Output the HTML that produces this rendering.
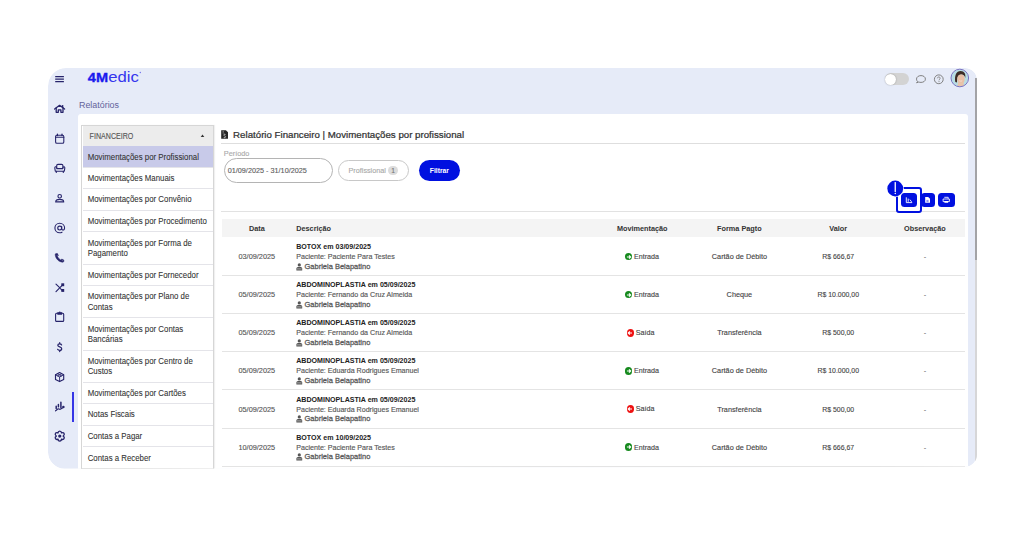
<!DOCTYPE html>
<html><head><meta charset="utf-8"><style>
html,body{margin:0;padding:0;width:1024px;height:538px;overflow:hidden;background:#fff;}
body{font-family:"Liberation Sans",sans-serif;}
#clip{position:absolute;left:0;top:0;width:1024px;height:538px;clip-path:path('M66 68 H965 A12 12 0 0 1 977 80 V454.8 A12 12 0 0 1 965 466.8 L64.5 468.7 A16.5 16.5 0 0 1 48 452.2 V86 A18 18 0 0 1 66 68 Z');}
.t{position:absolute;white-space:nowrap;}
.r{position:absolute;}
svg.r{overflow:visible;}
</style></head><body><div id="clip">
<svg class="r" style="left:0;top:0" width="1024" height="538"><path d="M66 68 H965 A12 12 0 0 1 977 80 V454.8 A12 12 0 0 1 965 466.8 L64.5 468.7 A16.5 16.5 0 0 1 48 452.2 V86 A18 18 0 0 1 66 68 Z" fill="#e6ebf8"/></svg>
<div class="r" style="left:975.00px;top:78.00px;width:2.00px;height:181.50px;background:#a3a3a6;"></div>
<div class="r" style="left:975.00px;top:259.50px;width:2.00px;height:210.50px;background:#d6d6d8;"></div>
<svg class="r" style="left:0;top:0" width="1024" height="538" viewBox="0 0 1024 538"><text x="87.8" y="81.9" font-family="Liberation Sans" font-weight="700" font-size="13.4" fill="#1a1aee" stroke="#1a1aee" stroke-width="0.35" textLength="20.2" lengthAdjust="spacingAndGlyphs">4M</text><text x="108.3" y="81.9" font-family="Liberation Sans" font-size="14.2" fill="#3535ee" textLength="30.6" lengthAdjust="spacingAndGlyphs">edic</text><circle cx="140.3" cy="72.4" r="0.75" fill="#7777ee"/></svg>

<div class="r" style="left:884.60px;top:73.20px;width:24.00px;height:11.90px;background:#d3d3d3;border-radius:6px;"></div>
<div class="r" style="left:884.60px;top:73.70px;width:11.00px;height:11.00px;background:#fff;border-radius:50%;box-shadow:0 0 1.5px rgba(0,0,0,.35);"></div>
<svg class="r" style="left:0;top:0" width="1024" height="538" viewBox="0 0 1024 538"><path d="M917.6 81.4 C916.8 80.8 916.5 80.1 916.5 79.1 C916.5 77 918.5 75.6 921 75.6 C923.5 75.6 925.4 77 925.4 79.1 C925.4 81.1 923.5 82.4 921 82.4 C920.2 82.4 919.4 82.3 918.8 82 L916.6 82.8 Z" fill="none" stroke="#7b7b7b" stroke-width="0.95" stroke-linejoin="round"/><circle cx="938.8" cy="79.3" r="4.4" fill="none" stroke="#7b7b7b" stroke-width="0.95"/><path d="M937.4 78.3 C937.4 77.4 938.1 76.9 938.8 76.9 C939.6 76.9 940.2 77.4 940.2 78.2 C940.2 79.1 939 79.2 939 80.3" fill="none" stroke="#8a8a8a" stroke-width="0.95"/><circle cx="939" cy="81.6" r="0.55" fill="#8a8a8a"/><defs><clipPath id="av"><circle cx="959.8" cy="78" r="8.6"/></clipPath></defs><circle cx="959.8" cy="78" r="8.6" fill="#b8dde4"/><g clip-path="url(#av)"><path d="M955.3 82 C954.3 75.5 956.3 70.9 960.6 70.9 C964.4 70.9 965.9 73.8 965.3 78 C964.8 75.6 963.4 74.2 961 74.4 C958.6 74.6 957.4 76.4 957.2 79.2 L956.9 82.6 Z" fill="#3d2c25"/><ellipse cx="961" cy="78.9" rx="3.7" ry="4.5" fill="#e9bfa6"/><path d="M957.5 82.5 C958.2 84.5 958.4 85.5 955 87.5 L966.5 87.5 C963.5 85.5 963.4 84.5 963.8 82.5 Z" fill="#e8c4aa"/><path d="M959.2 80.6 C960 81.3 961.4 81.3 962.2 80.6" stroke="#f6e6dc" stroke-width="0.8" fill="none"/></g><circle cx="959.8" cy="78" r="8.8" fill="none" stroke="#7a74c2" stroke-width="1"/></svg>
<div class="r" style="left:78.00px;top:114.30px;width:890.00px;height:365.70px;background:#fff;border-radius:3px;"></div>
<div class="r" style="left:81.20px;top:125.00px;width:132.40px;height:355.00px;background:#fff;border:1px solid #d6d6d6;box-sizing:border-box;box-shadow:1px 0 1px rgba(0,0,0,.06);"></div>
<div class="r" style="left:82.50px;top:126.00px;width:130.00px;height:20.00px;background:#ececec;"></div>
<div class="r" style="left:81.20px;top:468.00px;width:132.40px;height:1.00px;background:#d6d6d6;"></div>

<svg class="r" style="left:0;top:0" width="1024" height="538"><path d="M200.7 137.1 L202.5 134.6 L204.3 137.1Z" fill="#333"/></svg>
<div class="r" style="left:82.50px;top:146.00px;width:130.00px;height:21.30px;background:#c8cae9;"></div>

<div class="r" style="left:82.50px;top:167.00px;width:130.00px;height:1.00px;background:#e4e4e9;"></div>

<div class="r" style="left:82.50px;top:188.00px;width:130.00px;height:1.00px;background:#e4e4e9;"></div>

<div class="r" style="left:82.50px;top:210.00px;width:130.00px;height:1.00px;background:#e4e4e9;"></div>

<div class="r" style="left:82.50px;top:231.00px;width:130.00px;height:1.00px;background:#e4e4e9;"></div>


<div class="r" style="left:82.50px;top:264.00px;width:130.00px;height:1.00px;background:#e4e4e9;"></div>

<div class="r" style="left:82.50px;top:285.00px;width:130.00px;height:1.00px;background:#e4e4e9;"></div>


<div class="r" style="left:82.50px;top:317.00px;width:130.00px;height:1.00px;background:#e4e4e9;"></div>


<div class="r" style="left:82.50px;top:350.00px;width:130.00px;height:1.00px;background:#e4e4e9;"></div>


<div class="r" style="left:82.50px;top:382.00px;width:130.00px;height:1.00px;background:#e4e4e9;"></div>

<div class="r" style="left:82.50px;top:403.00px;width:130.00px;height:1.00px;background:#e4e4e9;"></div>

<div class="r" style="left:82.50px;top:425.00px;width:130.00px;height:1.00px;background:#e4e4e9;"></div>

<div class="r" style="left:82.50px;top:446.00px;width:130.00px;height:1.00px;background:#e4e4e9;"></div>

<svg class="r" style="left:0;top:0" width="1024" height="538" viewBox="0 0 1024 538"><path d="M55.2 76.6H63.9M55.2 79.1H63.9M55.2 81.6H63.9" stroke="#27246b" stroke-width="1.05" fill="none"/><path d="M54.6 109 L59.6 105.3 L64.6 109" stroke="#27246b" fill="none" stroke-linejoin="round" stroke-linecap="round" stroke-width="1.3"/><path d="M56.2 108 V112.3 H58.3 V109.8 H60.9 V112.3 H63 V108" stroke="#27246b" fill="none" stroke-linejoin="round" stroke-linecap="round" stroke-width="1.3"/><path d="M62.6 105.6 V107.4" stroke="#27246b" fill="none" stroke-linejoin="round" stroke-linecap="round" stroke-width="1.4"/><rect x="55.6" y="135.3" width="8.2" height="8" rx="1.3" stroke="#27246b" fill="none" stroke-linejoin="round" stroke-linecap="round" stroke-width="1.1"/><path d="M55.6 137.3 H63.8" stroke="#27246b" fill="none" stroke-linejoin="round" stroke-linecap="round" stroke-width="1.1"/><path d="M57.4 134.2 V135.6 M62 134.2 V135.6" stroke="#27246b" fill="none" stroke-linejoin="round" stroke-linecap="round" stroke-width="1.3"/><path d="M56.7 168.6 V165.6 C56.7 164.8 57.2 164.4 58 164.4 H61.6 C62.4 164.4 62.9 164.8 62.9 165.6 V168.6 Z" stroke="#27246b" fill="none" stroke-linejoin="round" stroke-linecap="round" stroke-width="1.1"/><path d="M56.7 167.4 C56.3 166.8 55.9 166.7 55.4 166.8 C54.9 167 54.7 167.5 54.8 168.1 L55.3 171.2 H64.3 L64.8 168.1 C64.9 167.5 64.7 167 64.2 166.8 C63.7 166.7 63.3 166.8 62.9 167.4" stroke="#27246b" fill="none" stroke-linejoin="round" stroke-linecap="round" stroke-width="1.1"/><path d="M56.3 171.3 V172.5 M63.3 171.3 V172.5" stroke="#27246b" fill="none" stroke-linejoin="round" stroke-linecap="round" stroke-width="1.1"/><circle cx="59.7" cy="196.2" r="1.75" stroke="#27246b" fill="none" stroke-linejoin="round" stroke-linecap="round" stroke-width="1.15"/><path d="M55.7 201.9 C55.7 200.2 57.3 199.4 59.7 199.4 C62.1 199.4 63.7 200.2 63.7 201.9 Z" stroke="#27246b" fill="none" stroke-linejoin="round" stroke-linecap="round" stroke-width="1.15"/><circle cx="59.7" cy="228" r="1.95" stroke="#27246b" fill="none" stroke-linejoin="round" stroke-linecap="round" stroke-width="1.15"/><path d="M61.65 226.3 V228.6 C61.65 229.6 62.3 230.1 63 230.1 C63.9 230.1 64.6 229.3 64.6 228 C64.6 225.2 62.4 223.2 59.7 223.2 C57 223.2 54.9 225.3 54.9 228 C54.9 230.7 57 232.8 59.7 232.8 C60.6 232.8 61.3 232.6 62 232.2" stroke="#27246b" fill="none" stroke-linejoin="round" stroke-linecap="round" stroke-width="1.1"/><path d="M56.3 253.5 L57.5 253.6 L58.4 255.6 L57.5 256.6 C58.2 258.1 59.3 259.3 60.8 260 L61.8 259.1 L63.8 260 L63.8 261.3 C63.7 261.9 63.2 262.3 62.6 262.2 C58.6 261.8 55.6 258.8 55.2 254.8 C55.1 254.1 55.6 253.5 56.3 253.5 Z" fill="#27246b" stroke="#27246b" stroke-width="0.5" stroke-linejoin="round"/><path d="M57.2 255.1 C57.3 255.5 57.3 255.8 57.1 256.2 M61.8 260.7 C62.2 260.6 62.5 260.6 62.9 260.8" stroke="#e6ebf8" stroke-width="0.4" fill="none"/><path d="M56.3 253.8 L57.4 253.9 L58.1 255.6 L57.2 256.6 C58 258.3 59.2 259.5 60.9 260.3 L61.9 259.4 L63.5 260.1" stroke="#e6ebf8" stroke-width="0" fill="none"/><path d="M56 284.2 L59.4 287.4 M56 291.6 L62.4 285.2" stroke="#27246b" fill="none" stroke-linejoin="round" stroke-linecap="round" stroke-width="1.15"/><rect x="61.3" y="283.3" width="2.9" height="2.9" fill="#27246b"/><rect x="61.3" y="289" width="2.9" height="2.9" fill="#27246b"/><path d="M60.4 288.6 L62 290.2" stroke="#27246b" fill="none" stroke-linejoin="round" stroke-linecap="round" stroke-width="1.1"/><rect x="55.6" y="313.3" width="8.1" height="8.1" rx="1" stroke="#27246b" fill="none" stroke-linejoin="round" stroke-linecap="round" stroke-width="1.1"/><path d="M57.6 312.6 H61.9 V314.4 H57.6 Z" fill="#27246b" stroke="#27246b" stroke-width="0.6" stroke-linejoin="round"/><circle cx="59.75" cy="312.3" r="0.8" fill="#27246b"/><path d="M61.6 344.9 C61.3 344.2 60.6 343.8 59.7 343.8 C58.6 343.8 57.8 344.4 57.8 345.3 C57.8 347.3 61.7 346.5 61.7 348.7 C61.7 349.7 60.8 350.4 59.7 350.4 C58.7 350.4 58 350 57.6 349.3 M59.7 342.7 V343.8 M59.7 350.4 V351.6" stroke="#27246b" fill="none" stroke-linejoin="round" stroke-linecap="round" stroke-width="1.25"/><path d="M59.6 372.5 L63.7 374.8 V379.4 L59.6 381.6 L55.5 379.4 V374.8 Z" stroke="#27246b" fill="none" stroke-linejoin="round" stroke-linecap="round" stroke-width="1.15"/><path d="M55.5 374.8 L59.6 377 L63.7 374.8 M59.6 377 V381.6 M57.5 373.7 L61.6 375.9 M61.6 373.7 L57.6 375.8" stroke="#27246b" fill="none" stroke-linejoin="round" stroke-linecap="round" stroke-width="0.9"/><path d="M56.2 406.3 V408.6 M58.4 404.4 V406.8 M60.9 402.2 V407.6" stroke="#27246b" fill="none" stroke-linejoin="round" stroke-linecap="round" stroke-width="1.5"/><path d="M55.6 410.8 L57.8 409 C58.6 408.4 59.3 409.6 60.2 409.3 L62.4 408" stroke="#27246b" fill="none" stroke-linejoin="round" stroke-linecap="round" stroke-width="1.2"/><circle cx="63.4" cy="407.1" r="1.25" fill="#27246b"/><g transform="translate(59.75 436.1) scale(1.12) translate(-59.75 -436.1)"><path d="M59.75 431.6 C60.9 431.6 61.3 432.6 61.3 433.3 C61.9 432.9 63 432.7 63.6 433.7 C64.2 434.7 63.4 435.6 62.8 436.1 C63.4 436.5 64.2 437.4 63.6 438.4 C63 439.4 61.9 439.2 61.3 438.8 C61.3 439.6 60.9 440.6 59.75 440.6 C58.6 440.6 58.2 439.6 58.2 438.8 C57.6 439.2 56.5 439.4 55.9 438.4 C55.3 437.4 56.1 436.5 56.7 436.1 C56.1 435.6 55.3 434.7 55.9 433.7 C56.5 432.7 57.6 432.9 58.2 433.3 C58.2 432.6 58.6 431.6 59.75 431.6 Z" stroke="#27246b" fill="none" stroke-linejoin="round" stroke-linecap="round" stroke-width="1.15"/><circle cx="59.75" cy="436.1" r="1.45" fill="#27246b"/></g></svg>
<div class="r" style="left:72.00px;top:392.00px;width:2.00px;height:29.80px;background:#3636e6;"></div>
<svg class="r" style="left:0;top:0" width="1024" height="538" viewBox="0 0 1024 538"><path d="M221.2 130.2 H225.9 L228 132.3 V138.8 H221.2 Z" fill="#262626"/><path d="M222.5 131.7 H224 M222.5 133 H224" stroke="#bbb" stroke-width="0.6"/><path d="M225.7 134.9 C225.5 134.5 225.1 134.3 224.6 134.3 C224 134.3 223.6 134.6 223.6 135.1 C223.6 136.1 225.7 135.7 225.7 136.8 C225.7 137.3 225.2 137.6 224.6 137.6 C224.1 137.6 223.7 137.4 223.5 137 M224.6 133.8 V134.3 M224.6 137.6 V138.1" stroke="#ddd" stroke-width="0.65" fill="none"/></svg>

<div class="r" style="left:221.00px;top:142.60px;width:744.00px;height:1.20px;background:#dedede;"></div>

<div class="r" style="left:223.60px;top:158.30px;width:109.40px;height:24.90px;border:1px solid #b4b4b4;border-radius:13px;box-sizing:border-box;"></div>

<div class="r" style="left:338.00px;top:160.00px;width:71.00px;height:21.00px;border:1px solid #c8c8c8;border-radius:11px;box-sizing:border-box;"></div>

<div class="r" style="left:388.40px;top:165.70px;width:9.60px;height:9.60px;background:#dcdcdc;border-radius:50%;"></div>

<div class="r" style="left:419.00px;top:160.00px;width:41.00px;height:21.00px;background:#0010e0;border-radius:11px;"></div>

<div class="r" style="left:221.00px;top:210.50px;width:744.00px;height:1.30px;background:#e2e2e2;"></div>
<div class="r" style="left:900.90px;top:193.00px;width:16.20px;height:14.40px;background:#0010e0;border-radius:3.5px;"></div>
<div class="r" style="left:920.60px;top:193.00px;width:14.10px;height:14.40px;background:#0010e0;border-radius:3.5px;"></div>
<div class="r" style="left:938.20px;top:193.00px;width:16.40px;height:14.40px;background:#0010e0;border-radius:3.5px;"></div>
<div class="r" style="left:896.00px;top:187.10px;width:26.20px;height:26.20px;border:2.4px solid #0010e0;border-radius:3px;box-sizing:border-box;"></div>
<svg class="r" style="left:0;top:0" width="1024" height="538"><circle cx="895.25" cy="188.5" r="8.6" fill="#fff"/><circle cx="895.25" cy="188.5" r="7.9" fill="#0010e0"/><path d="M895.25 182.6 V191.6" stroke="#fff" stroke-width="1.3" stroke-linecap="round"/><circle cx="895.25" cy="193.6" r="0.75" fill="#fff"/></svg>
<svg class="r" style="left:0;top:0" width="1024" height="538"><path d="M906.3 197.3 V202.6 H912.2" stroke="#fff" stroke-width="0.9" fill="none"/><path d="M908.2 198.6 V201.8 M909.9 199.6 L911.6 201.9" stroke="#fff" stroke-width="0.9" fill="none"/><path d="M925.2 197 H928.2 L930 198.8 V202.7 H925.2 Z" fill="#fff"/><path d="M926.4 200.4 H928.6 M926.4 201.6 H928.6" stroke="#0010e0" stroke-width="0.5"/><path d="M944.3 197.3 H948.2 V198.8 M943.1 199 H949.4 V201.6 H943.1 Z" stroke="#fff" stroke-width="0.85" fill="none"/><path d="M944.4 201 H948.1 V202.8 H944.4 Z" fill="#fff"/></svg>
<div class="r" style="left:221.80px;top:219.00px;width:742.80px;height:18.40px;background:#f4f4f4;"></div>






<div class="r" style="left:222.00px;top:275.00px;width:743.00px;height:1.00px;background:#e4e4e4;"></div>



<svg class="r" style="left:295.5px;top:262.5px" width="8" height="8" viewBox="0 0 8 8"><circle cx="3.3" cy="1.9" r="1.6" fill="#555"/><path d="M0.4 7.4 V5.6 C0.4 4.5 1.6 4.1 3.3 4.1 C5 4.1 6.2 4.5 6.2 5.6 V7.4 Z" fill="#555"/><path d="M0.9 5.9 H5.7" stroke="#ccc" stroke-width="0.7"/></svg>

<div class="r" style="left:624.70px;top:252.70px;width:7.60px;height:7.60px;background:#168a1e;border-radius:50%;"></div>
<svg class="r" style="left:625.5px;top:253.5px" width="6" height="6" viewBox="0 0 6 6"><path d="M0.9 3 H4.6 M3 1.4 L4.7 3 L3 4.6" stroke="#fff" stroke-width="1.1" fill="none"/></svg>




<div class="r" style="left:222.00px;top:313.00px;width:743.00px;height:1.00px;background:#e4e4e4;"></div>



<svg class="r" style="left:295.5px;top:300.65px" width="8" height="8" viewBox="0 0 8 8"><circle cx="3.3" cy="1.9" r="1.6" fill="#555"/><path d="M0.4 7.4 V5.6 C0.4 4.5 1.6 4.1 3.3 4.1 C5 4.1 6.2 4.5 6.2 5.6 V7.4 Z" fill="#555"/><path d="M0.9 5.9 H5.7" stroke="#ccc" stroke-width="0.7"/></svg>

<div class="r" style="left:624.70px;top:290.85px;width:7.60px;height:7.60px;background:#168a1e;border-radius:50%;"></div>
<svg class="r" style="left:625.5px;top:291.65px" width="6" height="6" viewBox="0 0 6 6"><path d="M0.9 3 H4.6 M3 1.4 L4.7 3 L3 4.6" stroke="#fff" stroke-width="1.1" fill="none"/></svg>




<div class="r" style="left:222.00px;top:351.00px;width:743.00px;height:1.00px;background:#e4e4e4;"></div>



<svg class="r" style="left:295.5px;top:338.8px" width="8" height="8" viewBox="0 0 8 8"><circle cx="3.3" cy="1.9" r="1.6" fill="#555"/><path d="M0.4 7.4 V5.6 C0.4 4.5 1.6 4.1 3.3 4.1 C5 4.1 6.2 4.5 6.2 5.6 V7.4 Z" fill="#555"/><path d="M0.9 5.9 H5.7" stroke="#ccc" stroke-width="0.7"/></svg>

<div class="r" style="left:626.70px;top:329.00px;width:7.30px;height:7.60px;background:#ee1111;border-radius:50%;"></div>
<svg class="r" style="left:627.4px;top:329.8px" width="6" height="6" viewBox="0 0 6 6"><path d="M5 3 H1.3 M2.9 1.4 L1.2 3 L2.9 4.6" stroke="#fff" stroke-width="1.1" fill="none"/></svg>




<div class="r" style="left:222.00px;top:389.00px;width:743.00px;height:1.00px;background:#e4e4e4;"></div>



<svg class="r" style="left:295.5px;top:376.95px" width="8" height="8" viewBox="0 0 8 8"><circle cx="3.3" cy="1.9" r="1.6" fill="#555"/><path d="M0.4 7.4 V5.6 C0.4 4.5 1.6 4.1 3.3 4.1 C5 4.1 6.2 4.5 6.2 5.6 V7.4 Z" fill="#555"/><path d="M0.9 5.9 H5.7" stroke="#ccc" stroke-width="0.7"/></svg>

<div class="r" style="left:624.70px;top:367.15px;width:7.60px;height:7.60px;background:#168a1e;border-radius:50%;"></div>
<svg class="r" style="left:625.5px;top:367.95px" width="6" height="6" viewBox="0 0 6 6"><path d="M0.9 3 H4.6 M3 1.4 L4.7 3 L3 4.6" stroke="#fff" stroke-width="1.1" fill="none"/></svg>




<div class="r" style="left:222.00px;top:428.00px;width:743.00px;height:1.00px;background:#e4e4e4;"></div>



<svg class="r" style="left:295.5px;top:415.1px" width="8" height="8" viewBox="0 0 8 8"><circle cx="3.3" cy="1.9" r="1.6" fill="#555"/><path d="M0.4 7.4 V5.6 C0.4 4.5 1.6 4.1 3.3 4.1 C5 4.1 6.2 4.5 6.2 5.6 V7.4 Z" fill="#555"/><path d="M0.9 5.9 H5.7" stroke="#ccc" stroke-width="0.7"/></svg>

<div class="r" style="left:626.70px;top:405.30px;width:7.30px;height:7.60px;background:#ee1111;border-radius:50%;"></div>
<svg class="r" style="left:627.4px;top:406.1px" width="6" height="6" viewBox="0 0 6 6"><path d="M5 3 H1.3 M2.9 1.4 L1.2 3 L2.9 4.6" stroke="#fff" stroke-width="1.1" fill="none"/></svg>




<div class="r" style="left:222.00px;top:466.00px;width:743.00px;height:1.00px;background:#e4e4e4;"></div>



<svg class="r" style="left:295.5px;top:453.25px" width="8" height="8" viewBox="0 0 8 8"><circle cx="3.3" cy="1.9" r="1.6" fill="#555"/><path d="M0.4 7.4 V5.6 C0.4 4.5 1.6 4.1 3.3 4.1 C5 4.1 6.2 4.5 6.2 5.6 V7.4 Z" fill="#555"/><path d="M0.9 5.9 H5.7" stroke="#ccc" stroke-width="0.7"/></svg>

<div class="r" style="left:624.70px;top:443.45px;width:7.60px;height:7.60px;background:#168a1e;border-radius:50%;"></div>
<svg class="r" style="left:625.5px;top:444.25px" width="6" height="6" viewBox="0 0 6 6"><path d="M0.9 3 H4.6 M3 1.4 L4.7 3 L3 4.6" stroke="#fff" stroke-width="1.1" fill="none"/></svg>




<svg class="r" style="left:0;top:0" width="1024" height="538" viewBox="0 0 1024 538" font-family="Liberation Sans"><text transform="translate(79.00,107.70) scale(0.917,1)" font-size="9.7" font-weight="400" fill="#62629a" text-anchor="start" stroke="none">Relatórios</text>
<text transform="translate(89.60,138.60) scale(0.855,1)" font-size="8.3" font-weight="400" fill="#555" text-anchor="start"  stroke="#555" stroke-width="0.12">FINANCEIRO</text>
<text transform="translate(87.70,159.75) scale(0.935,1)" font-size="8.4" font-weight="400" fill="#333" text-anchor="start" stroke="#333" stroke-width="0.08">Movimentações por Profissional</text>
<text transform="translate(87.70,181.05) scale(0.935,1)" font-size="8.4" font-weight="400" fill="#333" text-anchor="start" stroke="#333" stroke-width="0.08">Movimentações Manuais</text>
<text transform="translate(87.70,202.40) scale(0.935,1)" font-size="8.4" font-weight="400" fill="#333" text-anchor="start" stroke="#333" stroke-width="0.08">Movimentações por Convênio</text>
<text transform="translate(87.70,223.75) scale(0.935,1)" font-size="8.4" font-weight="400" fill="#333" text-anchor="start" stroke="#333" stroke-width="0.08">Movimentações por Procedimento</text>
<text transform="translate(87.70,245.65) scale(0.935,1)" font-size="8.4" font-weight="400" fill="#333" text-anchor="start" stroke="#333" stroke-width="0.08">Movimentações por Forma de</text>
<text transform="translate(87.70,255.85) scale(0.935,1)" font-size="8.4" font-weight="400" fill="#333" text-anchor="start" stroke="#333" stroke-width="0.08">Pagamento</text>
<text transform="translate(87.70,277.75) scale(0.935,1)" font-size="8.4" font-weight="400" fill="#333" text-anchor="start" stroke="#333" stroke-width="0.08">Movimentações por Fornecedor</text>
<text transform="translate(87.70,299.45) scale(0.935,1)" font-size="8.4" font-weight="400" fill="#333" text-anchor="start" stroke="#333" stroke-width="0.08">Movimentações por Plano de</text>
<text transform="translate(87.70,309.65) scale(0.935,1)" font-size="8.4" font-weight="400" fill="#333" text-anchor="start" stroke="#333" stroke-width="0.08">Contas</text>
<text transform="translate(87.70,331.80) scale(0.935,1)" font-size="8.4" font-weight="400" fill="#333" text-anchor="start" stroke="#333" stroke-width="0.08">Movimentações por Contas</text>
<text transform="translate(87.70,342.00) scale(0.935,1)" font-size="8.4" font-weight="400" fill="#333" text-anchor="start" stroke="#333" stroke-width="0.08">Bancárias</text>
<text transform="translate(87.70,364.10) scale(0.935,1)" font-size="8.4" font-weight="400" fill="#333" text-anchor="start" stroke="#333" stroke-width="0.08">Movimentações por Centro de</text>
<text transform="translate(87.70,374.30) scale(0.935,1)" font-size="8.4" font-weight="400" fill="#333" text-anchor="start" stroke="#333" stroke-width="0.08">Custos</text>
<text transform="translate(87.70,396.00) scale(0.935,1)" font-size="8.4" font-weight="400" fill="#333" text-anchor="start" stroke="#333" stroke-width="0.08">Movimentações por Cartões</text>
<text transform="translate(87.70,417.40) scale(0.935,1)" font-size="8.4" font-weight="400" fill="#333" text-anchor="start" stroke="#333" stroke-width="0.08">Notas Fiscais</text>
<text transform="translate(87.70,439.10) scale(0.935,1)" font-size="8.4" font-weight="400" fill="#333" text-anchor="start" stroke="#333" stroke-width="0.08">Contas a Pagar</text>
<text transform="translate(87.70,460.75) scale(0.935,1)" font-size="8.4" font-weight="400" fill="#333" text-anchor="start" stroke="#333" stroke-width="0.08">Contas a Receber</text>
<text transform="translate(233.10,138.00) scale(0.98,1)" font-size="9.9" font-weight="400" fill="#333" text-anchor="start" stroke="#333" stroke-width="0.25">Relatório Financeiro | Movimentações por profissional</text>
<text transform="translate(223.80,155.80) scale(1.03,1)" font-size="7.1" font-weight="400" fill="#aaa" text-anchor="start"  stroke="#aaa" stroke-width="0.12">Período</text>
<text transform="translate(227.70,173.30) scale(0.97,1)" font-size="7.5" font-weight="400" fill="#5e5e5e" text-anchor="start"  stroke="#5e5e5e" stroke-width="0.12">01/09/2025 - 31/10/2025</text>
<text transform="translate(348.50,173.20) scale(0.967,1)" font-size="7.5" font-weight="400" fill="#a8a8a8" text-anchor="start"  stroke="#a8a8a8" stroke-width="0.12">Profissional</text>
<text transform="translate(393.20,173.00) scale(1.0,1)" font-size="6.8" font-weight="400" fill="#777" text-anchor="middle"  stroke="#777" stroke-width="0.12">1</text>
<text transform="translate(439.40,173.20) scale(0.9,1)" font-size="7.5" font-weight="700" fill="#fff" text-anchor="middle" >Filtrar</text>
<text transform="translate(256.80,231.00) scale(0.935,1)" font-size="7.8" font-weight="700" fill="#333" text-anchor="middle" >Data</text>
<text transform="translate(296.20,231.00) scale(0.935,1)" font-size="7.8" font-weight="700" fill="#333" text-anchor="start" >Descrição</text>
<text transform="translate(642.20,231.00) scale(0.935,1)" font-size="7.8" font-weight="700" fill="#333" text-anchor="middle" >Movimentação</text>
<text transform="translate(739.40,231.00) scale(0.935,1)" font-size="7.8" font-weight="700" fill="#333" text-anchor="middle" >Forma Pagto</text>
<text transform="translate(838.20,231.00) scale(0.935,1)" font-size="7.8" font-weight="700" fill="#333" text-anchor="middle" >Valor</text>
<text transform="translate(924.90,231.00) scale(0.935,1)" font-size="7.8" font-weight="700" fill="#333" text-anchor="middle" >Observação</text>
<text transform="translate(256.80,259.00) scale(1.02,1)" font-size="7.2" font-weight="400" fill="#555" text-anchor="middle"  stroke="#555" stroke-width="0.12">03/09/2025</text>
<text transform="translate(296.20,249.00) scale(1.0,1)" font-size="7.1" font-weight="700" fill="#222" text-anchor="start" >BOTOX em 03/09/2025</text>
<text transform="translate(296.20,259.00) scale(0.948,1)" font-size="7.5" font-weight="400" fill="#585858" text-anchor="start" stroke="#585858" stroke-width="0.16">Paciente: Paciente Para Testes</text>
<text transform="translate(304.50,268.60) scale(1.0,1)" font-size="7.5" font-weight="400" fill="#595959" text-anchor="start"  stroke="#595959" stroke-width="0.26">Gabriela Belapatino</text>
<text transform="translate(634.00,258.80) scale(0.98,1)" font-size="7.3" font-weight="400" fill="#444" text-anchor="start"  stroke="#444" stroke-width="0.12">Entrada</text>
<text transform="translate(739.40,259.00) scale(1.0,1)" font-size="7.3" font-weight="400" fill="#444" text-anchor="middle"  stroke="#444" stroke-width="0.12">Cartão de Débito</text>
<text transform="translate(838.20,259.00) scale(0.95,1)" font-size="7.3" font-weight="400" fill="#444" text-anchor="middle"  stroke="#444" stroke-width="0.12">R$ 666,67</text>
<text transform="translate(924.90,259.00) scale(1.0,1)" font-size="7.3" font-weight="400" fill="#666" text-anchor="middle"  stroke="#666" stroke-width="0.12">-</text>
<text transform="translate(256.80,297.15) scale(1.02,1)" font-size="7.2" font-weight="400" fill="#555" text-anchor="middle"  stroke="#555" stroke-width="0.12">05/09/2025</text>
<text transform="translate(296.20,287.15) scale(1.0,1)" font-size="7.1" font-weight="700" fill="#222" text-anchor="start" >ABDOMINOPLASTIA em 05/09/2025</text>
<text transform="translate(296.20,297.15) scale(0.948,1)" font-size="7.5" font-weight="400" fill="#585858" text-anchor="start" stroke="#585858" stroke-width="0.16">Paciente: Fernando da Cruz Almeida</text>
<text transform="translate(304.50,306.75) scale(1.0,1)" font-size="7.5" font-weight="400" fill="#595959" text-anchor="start"  stroke="#595959" stroke-width="0.26">Gabriela Belapatino</text>
<text transform="translate(634.00,296.95) scale(0.98,1)" font-size="7.3" font-weight="400" fill="#444" text-anchor="start"  stroke="#444" stroke-width="0.12">Entrada</text>
<text transform="translate(739.40,297.15) scale(1.0,1)" font-size="7.3" font-weight="400" fill="#444" text-anchor="middle"  stroke="#444" stroke-width="0.12">Cheque</text>
<text transform="translate(838.20,297.15) scale(0.95,1)" font-size="7.3" font-weight="400" fill="#444" text-anchor="middle"  stroke="#444" stroke-width="0.12">R$ 10.000,00</text>
<text transform="translate(924.90,297.15) scale(1.0,1)" font-size="7.3" font-weight="400" fill="#666" text-anchor="middle"  stroke="#666" stroke-width="0.12">-</text>
<text transform="translate(256.80,335.30) scale(1.02,1)" font-size="7.2" font-weight="400" fill="#555" text-anchor="middle"  stroke="#555" stroke-width="0.12">05/09/2025</text>
<text transform="translate(296.20,325.30) scale(1.0,1)" font-size="7.1" font-weight="700" fill="#222" text-anchor="start" >ABDOMINOPLASTIA em 05/09/2025</text>
<text transform="translate(296.20,335.30) scale(0.948,1)" font-size="7.5" font-weight="400" fill="#585858" text-anchor="start" stroke="#585858" stroke-width="0.16">Paciente: Fernando da Cruz Almeida</text>
<text transform="translate(304.50,344.90) scale(1.0,1)" font-size="7.5" font-weight="400" fill="#595959" text-anchor="start"  stroke="#595959" stroke-width="0.26">Gabriela Belapatino</text>
<text transform="translate(635.80,335.10) scale(0.98,1)" font-size="7.3" font-weight="400" fill="#444" text-anchor="start"  stroke="#444" stroke-width="0.12">Saída</text>
<text transform="translate(739.40,335.30) scale(1.0,1)" font-size="7.3" font-weight="400" fill="#444" text-anchor="middle"  stroke="#444" stroke-width="0.12">Transferência</text>
<text transform="translate(838.20,335.30) scale(0.95,1)" font-size="7.3" font-weight="400" fill="#444" text-anchor="middle"  stroke="#444" stroke-width="0.12">R$ 500,00</text>
<text transform="translate(924.90,335.30) scale(1.0,1)" font-size="7.3" font-weight="400" fill="#666" text-anchor="middle"  stroke="#666" stroke-width="0.12">-</text>
<text transform="translate(256.80,373.45) scale(1.02,1)" font-size="7.2" font-weight="400" fill="#555" text-anchor="middle"  stroke="#555" stroke-width="0.12">05/09/2025</text>
<text transform="translate(296.20,363.45) scale(1.0,1)" font-size="7.1" font-weight="700" fill="#222" text-anchor="start" >ABDOMINOPLASTIA em 05/09/2025</text>
<text transform="translate(296.20,373.45) scale(0.948,1)" font-size="7.5" font-weight="400" fill="#585858" text-anchor="start" stroke="#585858" stroke-width="0.16">Paciente: Eduarda Rodrigues Emanuel</text>
<text transform="translate(304.50,383.05) scale(1.0,1)" font-size="7.5" font-weight="400" fill="#595959" text-anchor="start"  stroke="#595959" stroke-width="0.26">Gabriela Belapatino</text>
<text transform="translate(634.00,373.25) scale(0.98,1)" font-size="7.3" font-weight="400" fill="#444" text-anchor="start"  stroke="#444" stroke-width="0.12">Entrada</text>
<text transform="translate(739.40,373.45) scale(1.0,1)" font-size="7.3" font-weight="400" fill="#444" text-anchor="middle"  stroke="#444" stroke-width="0.12">Cartão de Débito</text>
<text transform="translate(838.20,373.45) scale(0.95,1)" font-size="7.3" font-weight="400" fill="#444" text-anchor="middle"  stroke="#444" stroke-width="0.12">R$ 10.000,00</text>
<text transform="translate(924.90,373.45) scale(1.0,1)" font-size="7.3" font-weight="400" fill="#666" text-anchor="middle"  stroke="#666" stroke-width="0.12">-</text>
<text transform="translate(256.80,411.60) scale(1.02,1)" font-size="7.2" font-weight="400" fill="#555" text-anchor="middle"  stroke="#555" stroke-width="0.12">05/09/2025</text>
<text transform="translate(296.20,401.60) scale(1.0,1)" font-size="7.1" font-weight="700" fill="#222" text-anchor="start" >ABDOMINOPLASTIA em 05/09/2025</text>
<text transform="translate(296.20,411.60) scale(0.948,1)" font-size="7.5" font-weight="400" fill="#585858" text-anchor="start" stroke="#585858" stroke-width="0.16">Paciente: Eduarda Rodrigues Emanuel</text>
<text transform="translate(304.50,421.20) scale(1.0,1)" font-size="7.5" font-weight="400" fill="#595959" text-anchor="start"  stroke="#595959" stroke-width="0.26">Gabriela Belapatino</text>
<text transform="translate(635.80,411.40) scale(0.98,1)" font-size="7.3" font-weight="400" fill="#444" text-anchor="start"  stroke="#444" stroke-width="0.12">Saída</text>
<text transform="translate(739.40,411.60) scale(1.0,1)" font-size="7.3" font-weight="400" fill="#444" text-anchor="middle"  stroke="#444" stroke-width="0.12">Transferência</text>
<text transform="translate(838.20,411.60) scale(0.95,1)" font-size="7.3" font-weight="400" fill="#444" text-anchor="middle"  stroke="#444" stroke-width="0.12">R$ 500,00</text>
<text transform="translate(924.90,411.60) scale(1.0,1)" font-size="7.3" font-weight="400" fill="#666" text-anchor="middle"  stroke="#666" stroke-width="0.12">-</text>
<text transform="translate(256.80,449.75) scale(1.02,1)" font-size="7.2" font-weight="400" fill="#555" text-anchor="middle"  stroke="#555" stroke-width="0.12">10/09/2025</text>
<text transform="translate(296.20,439.75) scale(1.0,1)" font-size="7.1" font-weight="700" fill="#222" text-anchor="start" >BOTOX em 10/09/2025</text>
<text transform="translate(296.20,449.75) scale(0.948,1)" font-size="7.5" font-weight="400" fill="#585858" text-anchor="start" stroke="#585858" stroke-width="0.16">Paciente: Paciente Para Testes</text>
<text transform="translate(304.50,459.35) scale(1.0,1)" font-size="7.5" font-weight="400" fill="#595959" text-anchor="start"  stroke="#595959" stroke-width="0.26">Gabriela Belapatino</text>
<text transform="translate(634.00,449.55) scale(0.98,1)" font-size="7.3" font-weight="400" fill="#444" text-anchor="start"  stroke="#444" stroke-width="0.12">Entrada</text>
<text transform="translate(739.40,449.75) scale(1.0,1)" font-size="7.3" font-weight="400" fill="#444" text-anchor="middle"  stroke="#444" stroke-width="0.12">Cartão de Débito</text>
<text transform="translate(838.20,449.75) scale(0.95,1)" font-size="7.3" font-weight="400" fill="#444" text-anchor="middle"  stroke="#444" stroke-width="0.12">R$ 666,67</text>
<text transform="translate(924.90,449.75) scale(1.0,1)" font-size="7.3" font-weight="400" fill="#666" text-anchor="middle"  stroke="#666" stroke-width="0.12">-</text></svg>
</div></body></html>
